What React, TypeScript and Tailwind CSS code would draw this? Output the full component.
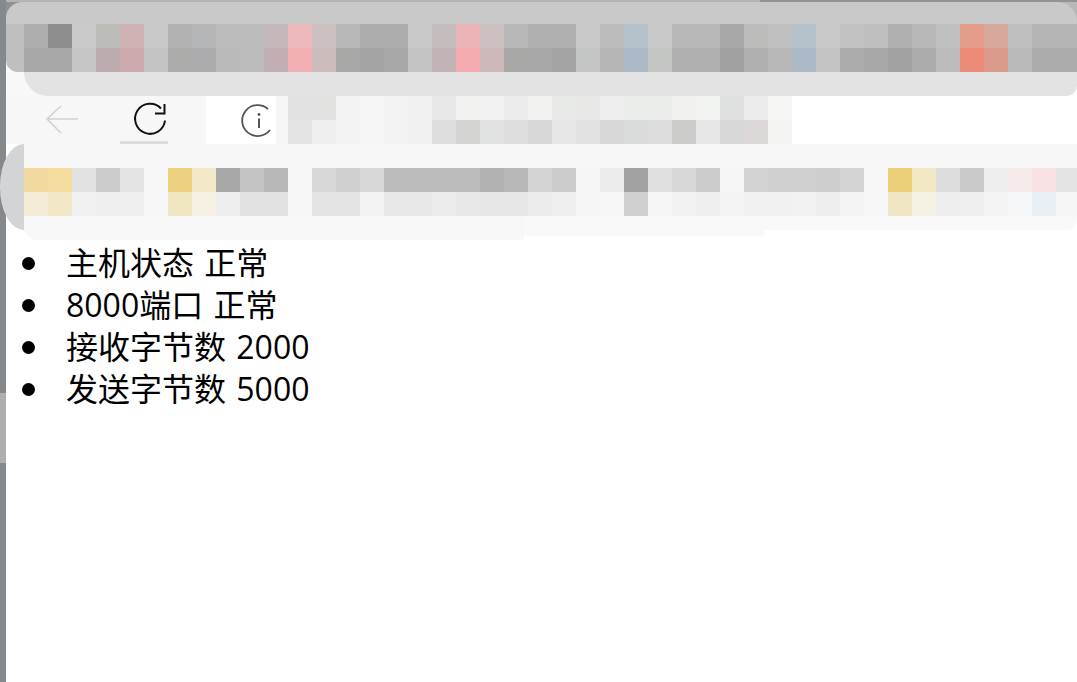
import React from 'react';

// blurred address bar and bookmarks, one colour per 24px block
const tabsTop = ['#aeaeae','#8e8e8e','#cacaca','#bcbcb8','#d0b2b4','#c8c8c8','#b2b2b2','#b4b6b8','#bcbcbc','#bcbcbc','#c4b8ba','#ecb8bc','#ccc0c0','#b8b8b8','#adadad','#adadad','#c8c8c8','#c4bcbc','#ebb5b8','#ccc0c0','#b8b8b8','#b0b0b0','#b0b0b0','#c8c8c8','#bcbcbc','#b4c0ca','#c8c8c8','#b8b8b8','#b8b8b8','#a8a8a8','#bcbcba','#c0c0c0','#b4c0ca','#c8c8c8','#c2c2c2','#bebebe','#b0b0b0','#b8b8b8','#c0c0c0','#e49c8a','#d8a89c','#bebebe','#b4b4b4','#b4b4b4'];
const tabsBottom = ['#a8a8a8','#a8a8a8','#c6c6c6','#bcacb0','#ccaaae','#c4c4c4','#acacaa','#acacae','#bababa','#bcbcbc','#c0aeb2','#f2aeb2','#ccbcbc','#a8a8a6','#a4a4a4','#a8a8a8','#c4c4c4','#c2b4b6','#f4acb0','#ccb8b8','#a8a8a6','#a8a8a8','#a4a4a4','#c4c6c6','#b6b6b6','#acbac8','#c4c6c4','#b0b0b0','#b0b0b0','#a0a0a0','#b0b0b0','#b8b8b8','#acbac8','#c4c4c4','#acacac','#a8a8a8','#a2a2a2','#acacac','#bcbcbc','#ec8c78','#dc9a8c','#bababa','#acacac','#acacac'];
const urlTop = ['#e2e2e2','#e2e2e0','#f3f3f3','#f5f5f5','#f3f3f3','#f1f1f1','#e8e8e8','#f2f2f0','#f2f2f2','#ebebeb','#f2f2f0','#e8eae8','#e8e8e6','#eeeeee','#eaecea','#eaecea','#f0f0ee','#f2f4f2','#dfe1e1','#ebebeb','#f5f5f3'];
const urlBottom = ['#e4e4e4','#efefef','#f3f3f3','#f5f5f5','#f3f3f3','#f0f0f0','#dedede','#d4d4d2','#e0e2e2','#dedede','#d8d8d8','#e6e6e6','#e2e2e2','#d8d8d8','#dadcdc','#dcdcdc','#ccccca','#e6e6e6','#d8d8d8','#dcd8d8','#f4f4f2'];
const marksTop = ['#f0daa0','#f2dc9e','#e2e2e2','#cccccc','#e4e4e4','#f7f7f7','#ecd27e','#f3e9c8','#a8a8a8','#c4c4c4','#b8b8b8','#f7f7f7','#d8d8d8','#d0d0d0','#d8d8d8','#bcbcbc','#bcbcbc','#bcbcbc','#bcbcbc','#b2b2b2','#b8b8b8','#d4d4d4','#cccccc','#f5f5f5','#ebebeb','#a2a2a2','#e0e0e0','#d8d8d8','#cccccc','#f5f5f5','#d2d2d2','#d0d0d0','#d0d0d0','#cecece','#d4d4d4','#f7f7f7','#ebcf78','#f3e8c4','#dcdcdc','#cacaca','#eeeeee','#f7eaea','#f8e2e4','#e4e4e4'];
const marksBottom = ['#f4ecd6','#f2e8c8','#f0f0f0','#efefef','#efefef','#f7f7f7','#f1e6c2','#f5f0e2','#eeeeee','#e2e2e2','#e2e2e2','#f7f7f7','#e4e4e4','#e4e4e4','#f3f3f3','#e8e8e8','#e8e8e8','#ebebeb','#e8e8e8','#e6e6e6','#e6e6e6','#ebebeb','#efefef','#f5f5f5','#f7f7f7','#d0d0d0','#f5f5f5','#f2f2f2','#efefef','#f4f4f4','#f1f1f1','#f0f0f0','#f2f2f2','#eeeeee','#f4f4f4','#f7f7f7','#f1e6c4','#f4f0e2','#eeeeee','#efefef','#f4f4f4','#f5f7f8','#e8f0f6','#f5f5f5'];

const items = ['主机状态 正常', '8000端口 正常', '接收字节数 2000', '发送字节数 5000'];

const Blocks: React.FC<{ colors: string[] }> = ({ colors }) => (
  <div className="flex h-[24px]">
    {colors.map((color, i) => (
      <div key={i} className="h-full w-[24px] shrink-0" style={{ backgroundColor: color }} />
    ))}
  </div>
);

export default function App() {
  return (
    <div className="flex h-[682px] w-full overflow-hidden bg-white font-['Open_Sans','Noto_Sans_CJK_SC',sans-serif] text-black">
      {/* window edge behind the page */}
      <div className="flex w-[6px] shrink-0 flex-col bg-[#85898b]">
        <div className="h-[393px]" />
        <div className="h-[70px] bg-[#adaeae]" />
      </div>

      <div className="min-w-0 flex-1 bg-white">
        {/* tabs */}
        <div className="flex h-[2px]">
          <div className="w-[754px] shrink-0 bg-[#b4b4b4]" />
          <div className="flex-1 bg-[#929292]" />
        </div>
        <div className="bg-[linear-gradient(to_right,#8e9092_50%,#b8b8b8_50%)]">
          <div className="h-[22px] rounded-tl-[16px] rounded-tr-[20px] bg-[#c9c9c9]" />
        </div>
        <div className="bg-[#f8f8f8]">
          <div className="flex h-[48px]">
            <div className="w-[18px] shrink-0 rounded-bl-[12px] bg-[#bfbfbf]" />
            <div className="min-w-0 flex-1 overflow-hidden">
              <Blocks colors={tabsTop} />
              <Blocks colors={tabsBottom} />
            </div>
          </div>
          <div className="flex h-[24px]">
            <div className="w-[18px] shrink-0" />
            <div className="min-w-0 flex-1 bg-[linear-gradient(to_right,#f8f8f8_50%,#ffffff_50%)]">
              <div className="h-full rounded-bl-[28px] rounded-br-[12px] bg-[#e3e3e3]" />
            </div>
          </div>
        </div>

        {/* navigation */}
        <div className="flex h-[48px]">
          <div className="flex w-[200px] shrink-0 bg-[#f7f7f7]">
            <div className="flex w-[114px] items-center justify-center pr-[2px]">
              <svg width="36" height="32" viewBox="0 0 36 32" fill="none" stroke="#d2d2d2" strokeWidth="1.6">
                <path d="M34 15H3M17 2 3 15l14 14" />
              </svg>
            </div>
            <div className="flex h-full w-[48px] items-center justify-center border-b-[3px] border-[#dcdcdc] pl-[12px] pt-[3px]">
              <svg width="36" height="36" viewBox="0 0 36 36" fill="none" stroke="#111" strokeWidth="2" className="shrink-0">
                <path d="M29 6.500A15 15 0 1 0 33 18.500" />
                <path d="M32.500 2v9.500H23" />
              </svg>
            </div>
          </div>
          <div className="flex w-[70px] shrink-0 items-center bg-white pl-[34px]">
            <svg width="36" height="36" viewBox="0 0 36 36" fill="none" stroke="#555" className="shrink-0">
              <path d="M28 7A15.500 15.500 0 1 0 30 28" strokeWidth="1.8" />
              <path d="M19 16.500v9.500" strokeWidth="2" />
              <circle cx="19" cy="12.500" r="1.400" fill="#555" stroke="none" />
            </svg>
          </div>
          <div className="w-[12px] shrink-0 bg-[#f6f6f6]" />
          <div className="w-[504px] shrink-0">
            <Blocks colors={urlTop} />
            <Blocks colors={urlBottom} />
          </div>
        </div>

        {/* bookmarks */}
        <div className="relative z-10 -ml-[6px] flex h-[96px]">
          <div className="h-[86px] w-[24px] shrink-0 rounded-l-[24px_42px] bg-[#d2d4d6]" />
          <div className="min-w-0 flex-1 overflow-hidden">
            <div className="h-[24px] bg-[#f7f7f7]" />
            <Blocks colors={marksTop} />
            <Blocks colors={marksBottom} />
            <div className="flex items-start">
              <div className="h-[24px] w-[500px] shrink-0 rounded-bl-[14px] bg-[#f8f8f8]" />
              <div className="h-[20px] w-[240px] shrink-0 bg-[#f9f9f9]" />
              <div className="h-[14px] flex-1 rounded-br-[10px] bg-[#f9f9f9]" />
            </div>
          </div>
        </div>

        {/* page content */}
        <ul className="mt-[2px] pl-[16px] text-[32px] leading-[42px] [word-spacing:2px]">
          {items.map(item => (
            <li key={item} className="flex h-[42px] items-center gap-[31px]">
              <span className="h-[13px] w-[13px] shrink-0 rounded-full bg-black" />
              <span>{item}</span>
            </li>
          ))}
        </ul>
      </div>
    </div>
  );
}
